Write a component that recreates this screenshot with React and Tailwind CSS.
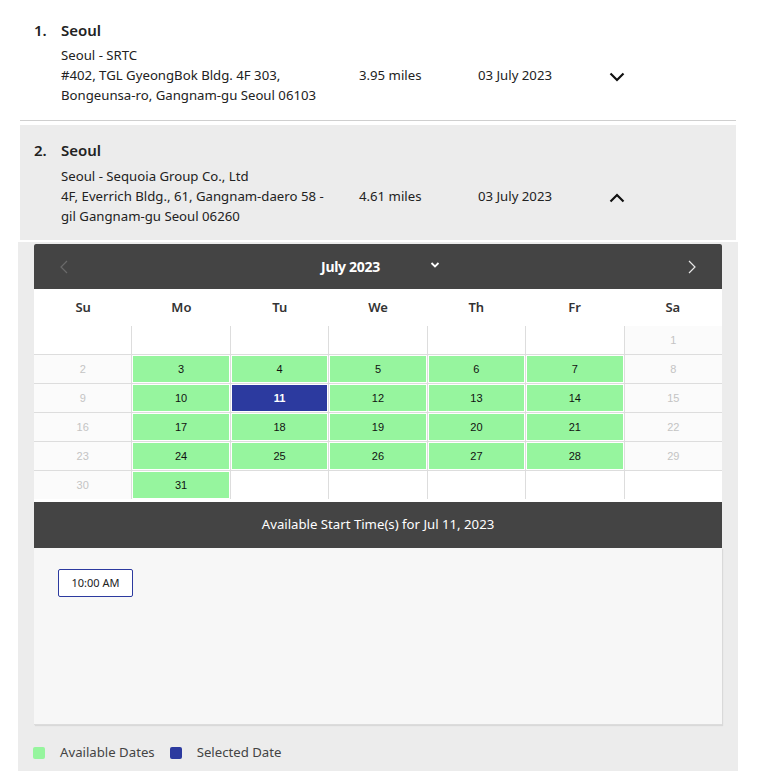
import React from "react";

const font = { fontFamily: '"Noto Sans", "Open Sans", sans-serif' };

function ChevronDown() {
  return (
    <svg width="16" height="10" viewBox="0 0 16 10" className="block">
      <polyline points="1.5,1.5 8,8 14.5,1.5" fill="none" stroke="#111" strokeWidth="2.2" />
    </svg>
  );
}
function ChevronUp() {
  return (
    <svg width="16" height="10" viewBox="0 0 16 10" className="block">
      <polyline points="1.5,8.5 8,2 14.5,8.5" fill="none" stroke="#111" strokeWidth="2.2" />
    </svg>
  );
}

function Item({ n, name, lines, dist, date, open, bg, gapClass, pbClass }) {
  return (
    <div className={`${bg} pl-[14px] pt-[15px] ${pbClass} flex text-[#222]`}>
      <div className="w-[27px] text-[15px] font-semibold leading-[20px]">{n}.</div>
      <div className="flex flex-col">
        <div className="text-[15px] font-semibold leading-[20px]">{name}</div>
        <div className={`flex items-center ${gapClass} text-[13.2px] leading-[20px]`}>
          <div className="w-[298px]">
            {lines.map((l, i) => (
              <div key={i}>{l}</div>
            ))}
          </div>
          <div className="w-[119px]">{dist}</div>
          <div className="w-[131px]">{date}</div>
          <div className="mt-[4px]">{open ? <ChevronUp /> : <ChevronDown />}</div>
        </div>
      </div>
    </div>
  );
}

const weekdays = ["Su", "Mo", "Tu", "We", "Th", "Fr", "Sa"];

function buildCells() {
  const cells = [];
  for (let i = 0; i < 6; i++) cells.push(null);
  for (let d = 1; d <= 31; d++) cells.push(d);
  while (cells.length < 42) cells.push(null);
  return cells;
}

const arial = { fontFamily: '"Liberation Sans", Arial, sans-serif' };

function Cell({ day, idx }) {
  const col = idx % 7;
  const weekend = col === 0 || col === 6;
  if (day === null) {
    return <div className="bg-white h-[28px]" />;
  }
  if (weekend) {
    return (
      <div className="bg-[#fbfbfb] h-[28px] flex items-center justify-center text-[11px] text-[#c4c4c4]" style={arial}>
        {day}
      </div>
    );
  }
  const selected = day === 11;
  return (
    <div className="bg-white h-[28px] p-px">
      <div
        className={`h-full w-full flex items-center justify-center text-[11px] ${selected ? "bg-[#2c3a9f] text-white font-bold" : "bg-[#96f59e] text-[#111]"}`}
        style={arial}
      >
        {day}
      </div>
    </div>
  );
}

export default function App() {
  const cells = buildCells();
  return (
    <div className="w-[764px] h-[771px] bg-white overflow-hidden" style={font}>
      <div className="pt-[5px] pl-[20px] w-[736px]">
        <Item
          n={1}
          name="Seoul"
          lines={["Seoul - SRTC", "#402, TGL GyeongBok Bldg. 4F 303,", "Bongeunsa-ro, Gangnam-gu Seoul 06103"]}
          dist="3.95 miles"
          date="03 July 2023"
          bg="bg-white"
          gapClass="mt-[5px]"
          pbClass="pb-[15px]"
        />
        <div className="h-px bg-[#cfcfcf]" />
        <div className="h-[4px]" />
        <Item
          n={2}
          name="Seoul"
          lines={["Seoul - Sequoia Group Co., Ltd", "4F, Everrich Bldg., 61, Gangnam-daero 58 -", "gil Gangnam-gu Seoul 06260"]}
          dist="4.61 miles"
          date="03 July 2023"
          open
          bg="bg-[#ececec]"
          gapClass="mt-[6px]"
          pbClass="pb-[14px]"
        />
      </div>
      <div className="ml-[18px] w-[720px] mt-[2px] bg-[#ececec] pt-[2px] px-[16px] pb-[14px]">
        <div className="bg-white">
          <div className="h-[45px] bg-[#444] rounded-t-[2px] flex items-center justify-between px-[26px]">
            <svg width="8" height="14" viewBox="0 0 8 14">
              <polyline points="7,1 1,7 7,13" fill="none" stroke="#6a6a6a" strokeWidth="1.2" />
            </svg>
            <div className="flex items-center pl-[5px]">
              <span className="text-white text-[14px] font-bold tracking-[-0.3px]">July 2023</span>
              <svg width="10" height="8" viewBox="0 0 10 8" className="ml-[50px] mb-[3px]">
                <polyline points="1.5,2 5,5.5 8.5,2" fill="none" stroke="#fff" strokeWidth="1.8" />
              </svg>
            </div>
            <svg width="8" height="14" viewBox="0 0 8 14">
              <polyline points="1,1 7,7 1,13" fill="none" stroke="#e8e8e8" strokeWidth="1.2" />
            </svg>
          </div>
          <div className="grid grid-cols-7 h-[37px] items-center text-[13px] font-semibold text-[#333]">
            {weekdays.map((w) => (
              <div key={w} className="text-center">{w}</div>
            ))}
          </div>
          <div className="grid grid-cols-7 gap-px bg-[#dddddd]">
            {cells.map((d, i) => (
              <Cell key={i} day={d} idx={i} />
            ))}
          </div>
          <div className="h-[3px] bg-white" />
          <div className="h-[46px] bg-[#444] flex items-center justify-center text-white text-[13.2px]">
            Available Start Time(s) for Jul 11, 2023
          </div>
          <div className="h-[177px] bg-[#f7f7f7] border-b border-[#dcdcdc] shadow-[1px_1px_1px_rgba(0,0,0,0.08)] pt-[21px] pl-[24px]">
            <button className="w-[75px] h-[28px] bg-white border border-[#2c3a9f] rounded-[2px] text-[11px] text-[#222]">
              10:00 AM
            </button>
          </div>
        </div>
        <div className="flex items-center mt-[18px] text-[13.2px] text-[#444]">
          <div className="w-[12px] h-[12px] rounded-[2px] bg-[#96f59e] -ml-[1px]" />
          <span className="ml-[15px]">Available Dates</span>
          <div className="w-[12px] h-[12px] rounded-[2px] bg-[#2c3a9f] ml-[15px]" />
          <span className="ml-[15px]">Selected Date</span>
        </div>
      </div>
    </div>
  );
}
